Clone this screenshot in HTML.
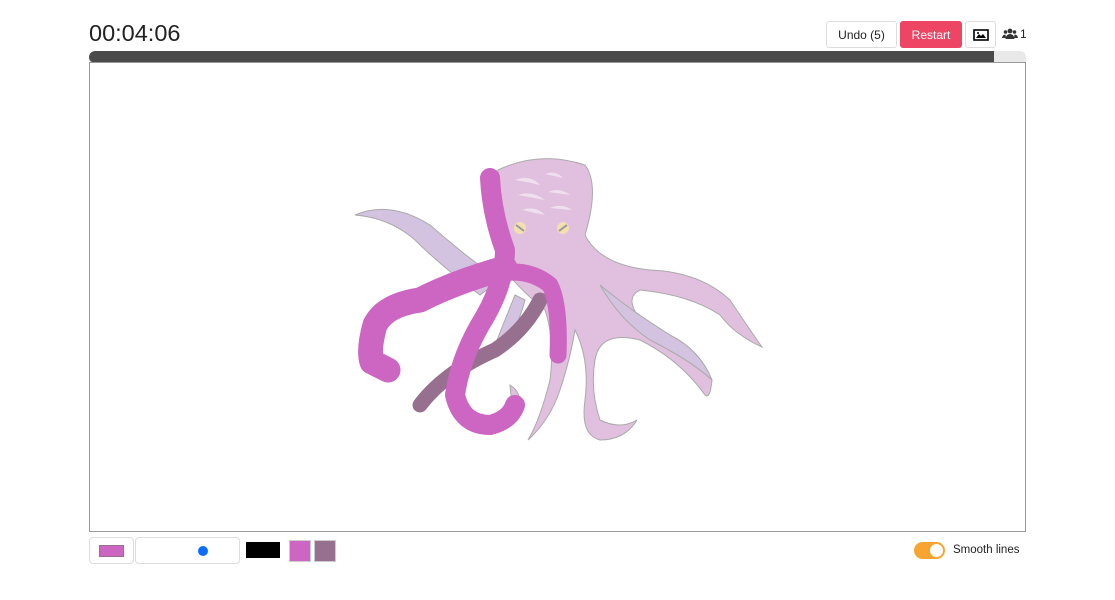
<!DOCTYPE html>
<html><head><style>
body{margin:0;width:1115px;height:600px;background:#fff;font-family:"Liberation Sans",sans-serif;position:relative;overflow:hidden}
.abs{position:absolute}
.btn{position:absolute;border:1px solid #ddd;border-radius:3px;background:#fff;font-size:12px;color:#222;display:flex;align-items:center;justify-content:center;box-sizing:border-box}
</style></head><body>
<div class="abs" style="left:89px;top:20px;font-size:23.5px;color:#222">00:04:06</div>
<div class="btn" style="left:826px;top:21px;width:71px;height:27px">Undo (5)</div>
<div class="btn" style="left:900px;top:21px;width:62px;height:27px;background:#ef4565;border-color:#ef4565;color:#fff">Restart</div>
<div class="btn" style="left:965px;top:21px;width:31px;height:27px">
<svg width="16" height="12" viewBox="0 0 16 12"><rect x="1" y="1" width="14" height="10" fill="none" stroke="#000" stroke-width="1.6"/><path d="M3 9 L6 5 L8 7 L10 5 L13 9Z" fill="#000"/><circle cx="5" cy="4" r="1" fill="#000"/></svg></div>
<svg class="abs" style="left:1002px;top:28px" width="16" height="12" viewBox="0 0 16 12"><circle cx="8" cy="3" r="2.4" fill="#333"/><circle cx="3.5" cy="4" r="1.8" fill="#333"/><circle cx="12.5" cy="4" r="1.8" fill="#333"/><path d="M3.5 11 Q4 6 8 6 Q12 6 12.5 11Z" fill="#333"/><path d="M0 10 Q0.5 6.5 3.5 6.5 L4 10Z M16 10 Q15.5 6.5 12.5 6.5 L12 10Z" fill="#333"/></svg>
<div class="abs" style="left:1020px;top:27px;font-size:12px;color:#222">1</div>
<div class="abs" style="left:89px;top:51px;width:937px;height:12px;background:#e9e9e9;border-radius:6px 6px 0 0;overflow:hidden"><div style="width:905px;height:12px;background:#4a4a4a;border-radius:6px 0 0 6px"></div></div>
<div class="abs" style="left:89px;top:62px;width:935px;height:468px;border:1px solid #999;background:#fff"></div>
<svg class="abs" style="left:0;top:0" width="1115" height="600">
<g stroke="#aaa" stroke-width="1">
<path d="M355 215 Q390 200 430 225 Q470 260 500 280 L480 295 Q440 265 415 240 Q390 218 355 215Z" fill="#d3c3e0"/>
<path d="M498 170 Q540 150 585 165 Q600 185 585 235 Q600 265 650 270 Q700 272 730 300 Q750 330 762 347 Q735 335 720 315 Q690 295 640 290 Q620 300 650 330 Q690 360 712 380 Q710 400 705 395 Q680 360 640 340 Q600 330 595 360 Q590 390 600 420 Q620 430 637 420 Q625 440 600 440 Q580 435 585 400 Q590 360 575 330 Q570 360 560 390 Q550 420 528 440 Q540 420 550 380 Q555 340 545 310 Q520 290 505 270 Q490 240 498 170Z" fill="#e0c0de"/>
<path d="M600 285 Q620 320 650 340 Q690 360 712 380 Q700 350 670 335 Q630 310 600 285Z" fill="#d3c3e0"/>
<path d="M515 295 Q505 320 495 345 L505 350 Q520 320 525 300Z" fill="#d3c3e0"/>
<path d="M510 385 Q522 392 520 410 L512 405Z" fill="#e0c0de"/>
</g>
<g fill="#f0e0ef"><path d="M515 180 Q530 174 540 185 Q528 182 515 180Z M545 174 Q556 170 563 178Z M518 195 Q532 190 545 200Z M548 192 Q560 187 570 195Z M522 210 Q535 205 545 215Z M550 208 Q562 203 572 210Z"/></g>
<circle cx="520" cy="228" r="6" fill="#f3dfb0"/><circle cx="563" cy="228" r="6" fill="#f3dfb0"/>
<path d="M516 225 L524 231 M559 231 L567 225" stroke="#999" stroke-width="2"/>
<g fill="none" stroke-linecap="round" stroke-linejoin="round">
<path d="M420 405 Q445 372 495 350 Q525 330 540 300" stroke="#97708f" stroke-width="15"/>
<path d="M490 178 Q492 215 505 250 Q505 285 480 325 Q460 360 455 395 Q462 425 490 425 Q510 420 515 405" stroke="#cc66c2" stroke-width="20"/>
<path d="M505 268 Q455 282 420 300 Q385 305 375 325 Q368 350 372 362 L388 370" stroke="#cc66c2" stroke-width="25"/>
<path d="M490 276 Q525 265 550 285 Q560 305 558 355" stroke="#cc66c2" stroke-width="17"/>
</g>
</svg>
<div class="btn" style="left:89px;top:537px;width:45px;height:27px;border-radius:4px"><div style="width:23px;height:10px;background:#cc66c2;border:1px solid #97708f"></div></div>
<div class="btn" style="left:135px;top:537px;width:105px;height:27px;border-radius:4px"><div style="width:10px;height:10px;border-radius:50%;background:#0d6efd;margin-left:30px"></div></div>
<div class="abs" style="left:246px;top:542px;width:34px;height:16px;background:#000"></div>
<div class="abs" style="left:289px;top:540px;width:20px;height:20px;background:#cc66c2;border:1px solid #ccc"></div>
<div class="abs" style="left:314px;top:540px;width:20px;height:20px;background:#97708f;border:1px solid #ccc"></div>
<div class="abs" style="left:914px;top:542px;width:31px;height:17px;border-radius:9px;background:#f7a431"><div style="position:absolute;right:2px;top:2px;width:13px;height:13px;border-radius:50%;background:#fff"></div></div>
<div class="abs" style="left:953px;top:544px;font-size:11.5px;color:#222">Smooth lines</div>
</body></html>
